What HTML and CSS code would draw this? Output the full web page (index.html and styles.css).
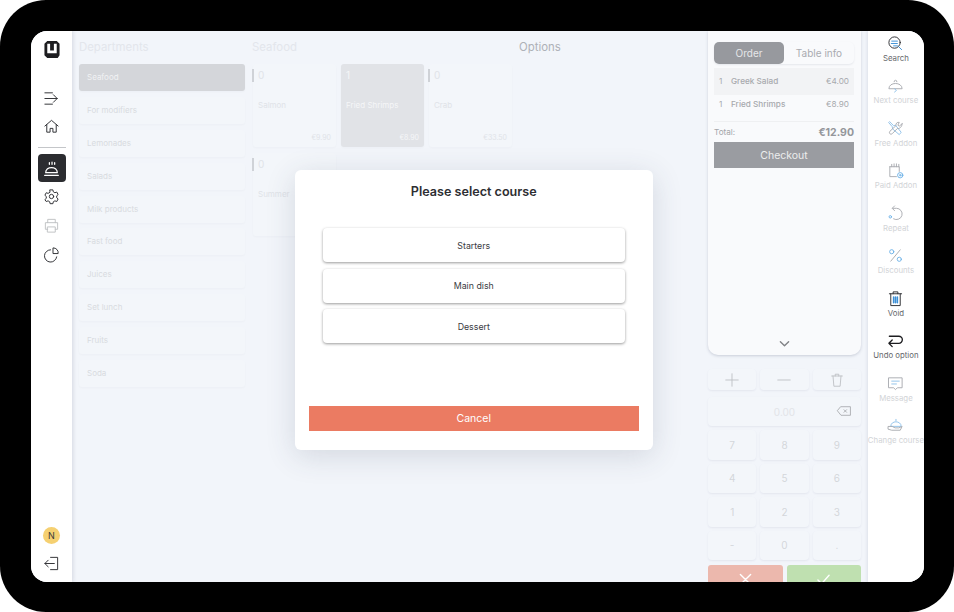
FILE: index.html
```html
<!DOCTYPE html>
<html lang="en">
<head>
    <meta charset="UTF-8">
    <meta name="viewport" content="width=device-width, initial-scale=1.0">
    <title>POS - Select course</title>
    <link rel="stylesheet" href="styles.css">
</head>
<body>

<div class="device">
<div class="screen">

    <nav class="sidebar">
        <svg class="logo" viewBox="0 0 16 18"><path d="M3 0h10l3 3v12l-2 3H3l-3-3V3z" fill="#1d1d20"/><path d="M3 3h3v7h4V3h3v10H3z" fill="#fff"/></svg>
        <svg class="nav-icon first" viewBox="0 0 18 18"><path d="M2 3h8M2 9h13M11 5l4 4-4 4M2 15h8"/></svg>
        <svg class="nav-icon" viewBox="0 0 18 18"><path d="M2 8.500 9 2.500l7 6M4 7v8h3.500v-4h3v4H14V7"/></svg>
        <div class="nav-line"></div>
        <div class="nav-active">
            <svg viewBox="0 0 18 18"><path d="M3.500 13c0-6.500 11-6.500 11 0zM2.500 15.500h13M7 3.500v1.500M9.500 3v2M12 3.500v1.500"/></svg>
        </div>
        <svg class="nav-icon gear" viewBox="0 0 18 18"><circle cx="9" cy="9" r="2.300"/><path d="M7.500 2h3l.4 2 1.700 1 2-.7 1.400 2.700-1.500 1.300v2l1.500 1.300-1.400 2.700-2-.7-1.700 1-.4 2h-3l-.4-2-1.700-1-2 .7L2 12.300l1.500-1.300V9L2 7.700 3.400 5l2 .7 1.700-1z"/></svg>
        <svg class="nav-icon faded" viewBox="0 0 18 18"><path d="M5 6V2.500h8V6M5 13H2.500V6h13v7H13M5 10.500h8V16H5z"/></svg>
        <svg class="nav-icon" viewBox="0 0 18 18"><path d="M8 4a6.500 6.500 0 1 0 6.500 7.500M11 2a5 5 0 0 1 5 6h-5z"/></svg>
        <div class="nav-bottom">
            <div class="avatar">N</div>
            <svg class="nav-icon" viewBox="0 0 18 18"><path d="M8 2.500h7.500v13H8M12 9H2M5.500 5.500 2 9l3.500 3.500"/></svg>
        </div>
    </nav>

    <main class="main">
        <section class="departments">
            <h2 class="col-title">Departments</h2>
            <div class="dept-list">
                <div class="dept selected">Seafood</div>
                <div class="dept">For modifiers</div>
                <div class="dept">Lemonades</div>
                <div class="dept">Salads</div>
                <div class="dept">Milk products</div>
                <div class="dept">Fast food</div>
                <div class="dept">Juices</div>
                <div class="dept">Set lunch</div>
                <div class="dept">Fruits</div>
                <div class="dept">Soda</div>
            </div>
        </section>

        <section class="products">
            <h2 class="col-title">Seafood</h2>
            <div class="product-grid">
                <div class="product marked"><span class="qty">0</span><span class="name">Salmon</span><span class="price">€9.90</span></div>
                <div class="product selected"><span class="qty">1</span><span class="name">Fried Shrimps</span><span class="price">€8.90</span></div>
                <div class="product marked"><span class="qty">0</span><span class="name">Crab</span><span class="price">€33.50</span></div>
                <div class="product marked"><span class="qty">0</span><span class="name">Summer</span></div>
            </div>
        </section>

        <section class="options">
            <h2 class="col-title dark">Options</h2>
        </section>

        <section class="order-col">
            <div class="order-panel">
                <div class="tabs">
                    <div class="tab active">Order</div>
                    <div class="tab">Table info</div>
                </div>
                <div class="order-row shaded"><span class="row-qty">1</span><span class="row-name">Greek Salad</span><span>€4.00</span></div>
                <div class="order-row"><span class="row-qty">1</span><span class="row-name">Fried Shrimps</span><span>€8.90</span></div>
                <div class="total"><span>Total:</span><strong>€12.90</strong></div>
                <div class="checkout">Checkout</div>
                <svg class="chevron" viewBox="0 0 12 8"><path d="M1.500 1.500 6 6l4.500-4.500"/></svg>
            </div>

            <div class="keys">
                <div class="key small"><svg viewBox="0 0 18 18"><path d="M9 2v14M2 9h14"/></svg></div>
                <div class="key small"><svg viewBox="0 0 18 18"><path d="M2 9h14"/></svg></div>
                <div class="key small"><svg viewBox="0 0 18 18"><path d="M3 4.500h12M7 4.500V2.500h4v2M4.500 4.500 5.500 16h7l1-11.500"/></svg></div>
                <div class="key display"><span>0.00</span><svg viewBox="0 0 18 14"><path d="M5.500 2H16.500v10H5.500L1.500 7zM9 5.500l3 3M12 5.500l-3 3"/></svg></div>
                <div class="key">7</div><div class="key">8</div><div class="key">9</div>
                <div class="key">4</div><div class="key">5</div><div class="key">6</div>
                <div class="key">1</div><div class="key">2</div><div class="key">3</div>
                <div class="key">-</div><div class="key">0</div><div class="key">.</div>
            </div>
            <div class="confirm-row">
                <div class="confirm red"><svg viewBox="0 0 14 14"><path d="M1.500 1.500l11 11M12.500 1.500l-11 11"/></svg></div>
                <div class="confirm green"><svg viewBox="0 0 14 14"><path d="M1 7.500 5 11.500 13 2.500"/></svg></div>
            </div>
        </section>
    </main>

    <aside class="actions">
        <div class="action">
            <svg viewBox="0 0 18 18"><circle cx="8" cy="8" r="6" stroke="#2b2c30"/><path d="M5 6.500h6M4.500 9h6.500M7 11.500h4M12.500 12.500l3 3" stroke="#3b8fd6"/></svg>
            <span>Search</span>
        </div>
        <div class="action off">
            <svg viewBox="0 0 18 18"><path d="M2 12c0-7 14-7 14 0zM7.500 5a1.500 1.500 0 0 1 3 0" stroke="#a9abb0"/><path d="M8 12.500l2 1.700-2 1.700" stroke="#8fc1ea"/></svg>
            <span>Next course</span>
        </div>
        <div class="action off">
            <svg viewBox="0 0 18 18"><path d="M3 2l4 4 2-.5L15 13l-2 2.500L6 9.500 5.500 7 2 3z" stroke="#8fc1ea"/><path d="M16 4l-3 2.500-1.500-1 1.500-3c-2-.5-4 1-3.500 3.500L3 12c-1.500 2 1 4 2.500 2.500L11 9c2 .5 5-1.500 5-5z" stroke="#a9abb0"/></svg>
            <span>Free Addon</span>
        </div>
        <div class="action off">
            <svg viewBox="0 0 18 18"><path d="M3 5v10.500h7M3 5h10v5M5 5V2.500M7.500 5V2M10 5V2M12.500 5V2.500" stroke="#a9abb0"/><circle cx="14" cy="14" r="2.800" stroke="#6fb2e8"/><circle cx="14" cy="14" r=".8" stroke="#6fb2e8"/></svg>
            <span>Paid Addon</span>
        </div>
        <div class="action off">
            <svg viewBox="0 0 18 18"><path d="M6 3.500h4a6 6 0 1 1-3 11.200M8 1 5.500 3.500 8 6" stroke="#a9abb0"/><circle cx="3.500" cy="12.500" r="1.300" stroke="#6fb2e8"/></svg>
            <span>Repeat</span>
        </div>
        <div class="action off">
            <svg viewBox="0 0 18 18"><path d="M14 3 4 15" stroke="#a9abb0"/><circle cx="5" cy="5" r="2.200" stroke="#6fb2e8"/><circle cx="13" cy="13" r="2.200" stroke="#6fb2e8"/></svg>
            <span>Discounts</span>
        </div>
        <div class="action">
            <svg viewBox="0 0 18 18"><path d="M2.500 4h13M6.500 4V2h5v2M4 4v12.500h10V4" stroke="#2b2c30"/><path d="M7 7.500v6M9 7.500v6M11 7.500v6" stroke="#3b8fd6" stroke-width="1.600"/></svg>
            <span>Void</span>
        </div>
        <div class="action">
            <svg viewBox="0 0 18 18"><path d="M2.500 4.500h10a3.500 3.500 0 0 1 0 7.500H2M5.500 8.500 2 12l3.500 3.500" stroke="#1d1d20" stroke-width="1.400"/></svg>
            <span>Undo option</span>
        </div>
        <div class="action off">
            <svg viewBox="0 0 18 18"><path d="M2 3h14v10.500h-5L9 15.500l-2-2H2z" stroke="#a9abb0"/><path d="M5 6.500h8M5 9.500h5" stroke="#8fc1ea"/></svg>
            <span>Message</span>
        </div>
        <div class="action off">
            <svg viewBox="0 0 18 18"><path d="M4 9.500c0-6 11-6 11 0zM9.500 4V2.500" stroke="#8fc1ea"/><path d="M1.500 10h4l3 1.500h4l3.500-1.500-2 4H5l-3.500-1z" stroke="#a9abb0"/></svg>
            <span>Change course</span>
        </div>
    </aside>

    <div class="modal">
        <h3 class="modal-title">Please select course</h3>
        <div class="course-list">
            <button class="course">Starters</button>
            <button class="course">Main dish</button>
            <button class="course">Dessert</button>
        </div>
        <button class="cancel">Cancel</button>
    </div>

</div>
</div>

</body>
</html>
```

FILE: styles.css
```css
* {
    box-sizing: border-box;
}

body {
    margin: 0;
    background-color: #fff;
    font-family: Inter, "Liberation Sans", sans-serif;
}

svg {
    display: block;
    fill: none;
    stroke-linecap: round;
    stroke-linejoin: round;
    stroke-width: 1;
}

.device {
    width: 954px;
    height: 612px;
    padding: 31px 30px 30px 31px;
    background-color: #000;
    border-radius: 46px;
}

.screen {
    position: relative;
    display: flex;
    height: 551px;
    overflow: hidden;
    background-color: #f2f5fa;
    border-radius: 16px;
}

/* left nav */
.sidebar {
    display: flex;
    flex-direction: column;
    align-items: center;
    flex: 0 0 41px;
    padding-top: 10px;
    background-color: #fff;
    box-shadow: 1px 0 4px rgba(40, 50, 80, 0.15);
    z-index: 1;
}

.logo {
    width: 16px;
    height: 17px;
}

.nav-icon {
    width: 17px;
    height: 17px;
    margin-bottom: 12px;
    stroke: #2b2c30;
}

.nav-icon.first {
    margin-top: 32px;
    margin-bottom: 11px;
}

.nav-icon.gear {
    margin-top: 6px;
}

.nav-icon.faded {
    stroke: #bfc1c4;
}

.nav-line {
    width: 28px;
    height: 1px;
    margin: 0 0 6px;
    background-color: #c4c6c9;
}

.nav-active {
    display: flex;
    align-items: center;
    justify-content: center;
    width: 28px;
    height: 28px;
    background-color: #2b2c30;
    border-radius: 4px;
}

.nav-active svg {
    width: 19px;
    height: 19px;
    stroke: #fff;
    stroke-width: 1.200;
}

.nav-bottom {
    display: flex;
    flex-direction: column;
    align-items: center;
    margin-top: auto;
    padding-bottom: 1px;
}

.nav-bottom .nav-icon {
    margin-bottom: 9px;
}

.avatar {
    display: flex;
    align-items: center;
    justify-content: center;
    width: 17px;
    height: 17px;
    margin-bottom: 11px;
    background-color: #f5d071;
    border-radius: 50%;
    font-size: 9px;
    color: #3a3a3a;
}

/* center */
.main {
    display: flex;
    flex: 1;
    min-width: 0;
    padding: 0 7px;
}

.col-title {
    height: 33px;
    margin: 0;
    padding-top: 9px;
    font-size: 11.400px;
    line-height: 15px;
    font-weight: 400;
    color: #e3e6ec;
}

.col-title.dark {
    color: #aeb1b7;
}

.departments {
    flex: 0 0 166px;
}

.dept-list {
    display: flex;
    flex-direction: column;
    gap: 5.900px;
}

.dept {
    height: 27px;
    padding-left: 8px;
    background-color: #f3f6fa;
    border-radius: 3px;
    box-shadow: 0 1px 2px rgba(60, 70, 100, 0.03);
    font-size: 8px;
    line-height: 27px;
    color: #d8dbe0;
}

.dept.selected {
    background-color: #d4d6da;
    color: #f1f2f4;
}

.products {
    flex: 0 0 260px;
    margin-left: 7px;
}

.product-grid {
    display: grid;
    grid-template-columns: repeat(3, 83px);
    grid-auto-rows: 83px;
    column-gap: 5px;
    row-gap: 6px;
    padding-left: 1px;
}

.product {
    position: relative;
    display: flex;
    flex-direction: column;
    padding: 5px;
    background-color: #f3f6fa;
    border-radius: 3px;
    box-shadow: 0 1px 2px rgba(60, 70, 100, 0.03);
    font-size: 8px;
    color: #e0e3e8;
}

.product.marked::before {
    content: "";
    position: absolute;
    top: 5px;
    left: -1px;
    width: 2px;
    height: 13px;
    background-color: #cfd2d7;
}

.product.selected {
    background-color: #e1e3e7;
    color: #f5f6f8;
}

.qty {
    font-size: 10px;
    line-height: 12px;
}

.name {
    margin-top: 18px;
    line-height: 12px;
}

.price {
    margin-top: auto;
    align-self: flex-end;
    font-size: 7px;
}

.options {
    flex: 0 0 189px;
    margin-left: 7px;
}

/* order column */
.order-col {
    flex: 0 0 153px;
}

.order-panel {
    position: relative;
    height: 324px;
    padding: 11px 7px 0 6px;
    background-color: #f9fafc;
    border-radius: 0 0 10px 10px;
    box-shadow: 0 1px 3px rgba(60, 70, 100, 0.22);
}

.tabs {
    display: flex;
    height: 22px;
    margin-bottom: 4px;
    border-radius: 5px;
    box-shadow: 0 1px 2px rgba(60, 70, 100, 0.1);
}

.tab {
    flex: 1;
    font-size: 10px;
    line-height: 22px;
    text-align: center;
    color: #a9abb0;
}

.tab.active {
    background-color: #97999e;
    border-radius: 5px;
    color: #e6e7e9;
}

.order-row {
    display: flex;
    height: 18px;
    padding: 0 5px;
    font-size: 8.200px;
    line-height: 18px;
    color: #a7a9ad;
}

.order-row.shaded {
    height: 27px;
    line-height: 27px;
    background-color: #f2f3f5;
}

.row-qty {
    width: 12px;
}

.row-name {
    flex: 1;
    font-weight: 500;
}

.total {
    display: flex;
    justify-content: space-between;
    align-items: center;
    height: 21px;
    margin-top: 8px;
    border-top: 1px solid #eff0f2;
    font-size: 8.200px;
    color: #a4a6aa;
}

.total strong {
    font-size: 10.500px;
    font-weight: 700;
    color: #94969b;
}

.checkout {
    height: 26px;
    background-color: #9a9ca1;
    font-size: 10.500px;
    line-height: 27px;
    text-align: center;
    color: #eceded;
}

.chevron {
    position: absolute;
    left: 71px;
    bottom: 7px;
    width: 11px;
    height: 8px;
    stroke: #808286;
    stroke-width: 1.500;
}

.keys {
    display: grid;
    grid-template-columns: repeat(3, 1fr);
    gap: 4px;
    margin-top: 14px;
}

.key {
    display: flex;
    align-items: center;
    justify-content: center;
    height: 29.400px;
    background-color: #f3f6fa;
    border-radius: 4px;
    box-shadow: 0 1px 2px rgba(60, 70, 100, 0.08);
    font-size: 10px;
    color: #d4d6da;
}

.key.small {
    height: 21px;
    margin-bottom: 3px;
}

.key svg {
    width: 16px;
    height: 16px;
    stroke: #bcbfc3;
}

.key.display {
    position: relative;
    grid-column: span 3;
    color: #e2e4e8;
}

.key.display svg {
    position: absolute;
    right: 9px;
    top: 8px;
    height: 12px;
    stroke: #a6a8ac;
}

.confirm-row {
    display: flex;
    gap: 4px;
    margin-top: 5px;
}

.confirm {
    display: flex;
    justify-content: center;
    flex: 1;
    height: 30px;
    padding-top: 8px;
    border-radius: 3px 3px 0 0;
}

.confirm svg {
    width: 13px;
    height: 13px;
    stroke: #fff;
    stroke-width: 1.500;
}

.confirm.red {
    background-color: #ecb8ad;
}

.confirm.green {
    background-color: #bfe0b0;
}

/* right actions */
.actions {
    display: flex;
    flex-direction: column;
    flex: 0 0 56px;
    align-items: center;
    background-color: #fff;
    box-shadow: -1px 0 3px rgba(40, 50, 80, 0.1);
    z-index: 1;
}

.action {
    display: flex;
    flex-direction: column;
    align-items: center;
    flex: 0 0 42.500px;
    width: 100%;
    padding-top: 3.500px;
    font-size: 7.800px;
    line-height: 10px;
    color: #66686c;
    white-space: nowrap;
}

.action svg {
    width: 17px;
    height: 17px;
    margin-bottom: 1px;
}

.action.off {
    color: #d2d4d7;
}

/* course dialog */
.modal {
    position: absolute;
    top: 139px;
    left: 264px;
    display: flex;
    flex-direction: column;
    width: 357.500px;
    height: 279.500px;
    padding: 14px 14px 18.500px;
    background-color: #fff;
    border-radius: 6px;
    box-shadow: 0 6px 30px rgba(50, 60, 90, 0.16);
}

.modal-title {
    margin: 0;
    font-size: 12.600px;
    line-height: 16px;
    font-weight: 600;
    text-align: center;
    color: #2d2e32;
}

.course-list {
    display: flex;
    flex-direction: column;
    gap: 6.500px;
    padding: 28px 14px 0;
}

.course {
    height: 34px;
    background-color: #fff;
    border: none;
    border-radius: 4px;
    box-shadow: 0 1px 3px rgba(0, 0, 0, 0.4);
    font-family: inherit;
    font-size: 8.800px;
    color: #3a3b3f;
}

.cancel {
    height: 25px;
    margin-top: auto;
    background-color: #eb7b62;
    border: none;
    font-family: inherit;
    font-size: 10.500px;
    color: #fff;
}
```
